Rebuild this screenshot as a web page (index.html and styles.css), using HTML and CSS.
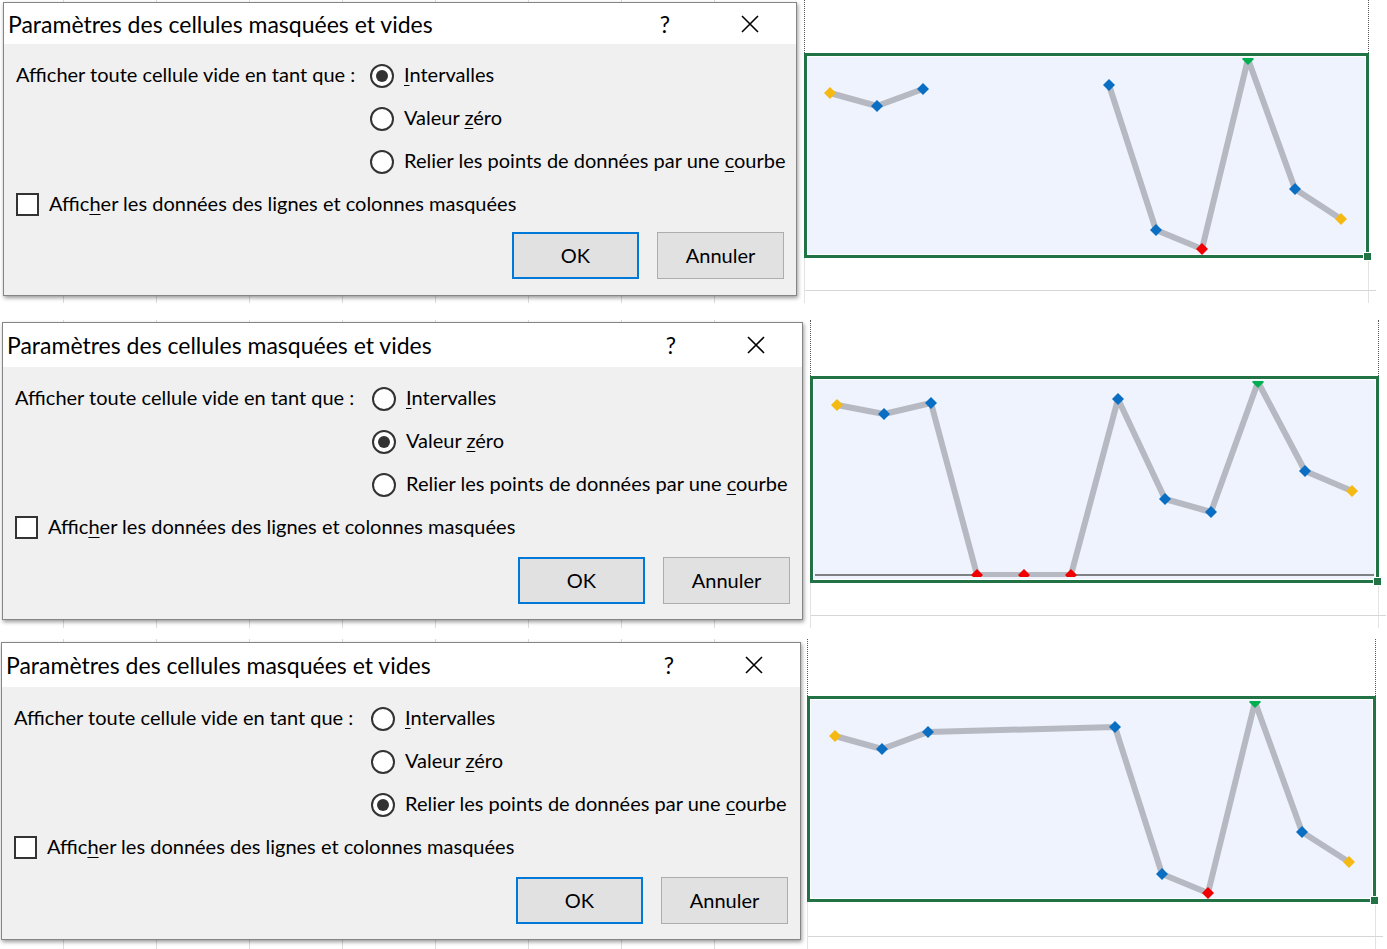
FILE: index.html
```html
<!DOCTYPE html>
<html lang="fr">
<head>
    <meta charset="UTF-8">
    <title>Paramètres des cellules masquées et vides</title>
    <link rel="stylesheet" href="styles.css">
</head>
<body>
<div class="page">

    <!-- 1 : Intervalles -->
    <div class="shot shot-1">
        <div class="dialog">
            <div class="titlebar">
                <div class="title">Paramètres des cellules masquées et vides</div>
                <div class="help">?</div>
                <div class="close"><svg width="18" height="18" viewBox="0 0 18 18"><path d="M1 1L17 17M17 1L1 17"/></svg></div>
            </div>
            <div class="dialog-body">
                <div class="option-grid">
                    <div class="label">Afficher toute cellule vide en tant que :</div>
                    <div class="radio on"><span class="radio-dot"></span><span class="text"><u>I</u>ntervalles</span></div>
                    <div class="radio col-2"><span class="radio-dot"></span><span class="text">Valeur <u>z</u>éro</span></div>
                    <div class="radio col-2"><span class="radio-dot"></span><span class="text">Relier les points de données par une <u>c</u>ourbe</span></div>
                    <div class="check"><span class="check-box"></span><span class="text">Affic<u>h</u>er les données des lignes et colonnes masquées</span></div>
                </div>
                <div class="buttons">
                    <button class="btn btn-default">OK</button>
                    <button class="btn">Annuler</button>
                </div>
            </div>
        </div>
        <div class="sheet">
            <div class="sheet-top"></div>
            <div class="chart">
                <svg viewBox="0 0 559 199">
                    <defs>
                        <path id="dm" d="M0 -6L6 0 0 6 -6 0Z"/>
                        <clipPath id="clip1"><rect x="0" y="2" width="559" height="197"/></clipPath>
                    </defs>
                    <g clip-path="url(#clip1)">
                        <polyline class="spark" points="23,37 70,50 116,33"/>
                        <polyline class="spark" points="302,29 349,174 395,193 441,3 488,133 534,163"/>
                        <use href="#dm" x="23" y="37" class="m-end"/>
                        <use href="#dm" x="70" y="50" class="m-mid"/>
                        <use href="#dm" x="116" y="33" class="m-mid"/>
                        <use href="#dm" x="302" y="29" class="m-mid"/>
                        <use href="#dm" x="349" y="174" class="m-mid"/>
                        <use href="#dm" x="395" y="193" class="m-low"/>
                        <use href="#dm" x="441" y="3" class="m-high"/>
                        <use href="#dm" x="488" y="133" class="m-mid"/>
                        <use href="#dm" x="534" y="163" class="m-end"/>
                    </g>
                </svg>
            </div>
            <div class="sheet-bottom"><div class="grid-row"></div></div>
        </div>
    </div>

    <!-- 2 : Valeur zéro -->
    <div class="shot shot-2">
        <div class="dialog">
            <div class="titlebar">
                <div class="title">Paramètres des cellules masquées et vides</div>
                <div class="help">?</div>
                <div class="close"><svg width="18" height="18" viewBox="0 0 18 18"><path d="M1 1L17 17M17 1L1 17"/></svg></div>
            </div>
            <div class="dialog-body">
                <div class="option-grid">
                    <div class="label">Afficher toute cellule vide en tant que :</div>
                    <div class="radio"><span class="radio-dot"></span><span class="text"><u>I</u>ntervalles</span></div>
                    <div class="radio on col-2"><span class="radio-dot"></span><span class="text">Valeur <u>z</u>éro</span></div>
                    <div class="radio col-2"><span class="radio-dot"></span><span class="text">Relier les points de données par une <u>c</u>ourbe</span></div>
                    <div class="check"><span class="check-box"></span><span class="text">Affic<u>h</u>er les données des lignes et colonnes masquées</span></div>
                </div>
                <div class="buttons">
                    <button class="btn btn-default">OK</button>
                    <button class="btn">Annuler</button>
                </div>
            </div>
        </div>
        <div class="sheet">
            <div class="sheet-top"></div>
            <div class="chart">
                <svg viewBox="0 0 563 201">
                    <defs>
                        <clipPath id="clip2"><rect x="0" y="2" width="563" height="196"/></clipPath>
                    </defs>
                    <line class="axis" x1="2" y1="196" x2="561" y2="196"/>
                    <g clip-path="url(#clip2)">
                        <polyline class="spark" points="24,26 71,35 118,24 164,196 211,196 258,196 305,20 352,120 398,133 445,3 492,92 539,112"/>
                        <use href="#dm" x="24" y="26" class="m-end"/>
                        <use href="#dm" x="71" y="35" class="m-mid"/>
                        <use href="#dm" x="118" y="24" class="m-mid"/>
                        <use href="#dm" x="164" y="196" class="m-low"/>
                        <use href="#dm" x="211" y="196" class="m-low"/>
                        <use href="#dm" x="258" y="196" class="m-low"/>
                        <use href="#dm" x="305" y="20" class="m-mid"/>
                        <use href="#dm" x="352" y="120" class="m-mid"/>
                        <use href="#dm" x="398" y="133" class="m-mid"/>
                        <use href="#dm" x="445" y="3" class="m-high"/>
                        <use href="#dm" x="492" y="92" class="m-mid"/>
                        <use href="#dm" x="539" y="112" class="m-end"/>
                    </g>
                </svg>
            </div>
            <div class="sheet-bottom"><div class="grid-row"></div></div>
        </div>
    </div>

    <!-- 3 : Relier les points -->
    <div class="shot shot-3">
        <div class="dialog">
            <div class="titlebar">
                <div class="title">Paramètres des cellules masquées et vides</div>
                <div class="help">?</div>
                <div class="close"><svg width="18" height="18" viewBox="0 0 18 18"><path d="M1 1L17 17M17 1L1 17"/></svg></div>
            </div>
            <div class="dialog-body">
                <div class="option-grid">
                    <div class="label">Afficher toute cellule vide en tant que :</div>
                    <div class="radio"><span class="radio-dot"></span><span class="text"><u>I</u>ntervalles</span></div>
                    <div class="radio col-2"><span class="radio-dot"></span><span class="text">Valeur <u>z</u>éro</span></div>
                    <div class="radio on col-2"><span class="radio-dot"></span><span class="text">Relier les points de données par une <u>c</u>ourbe</span></div>
                    <div class="check"><span class="check-box"></span><span class="text">Affic<u>h</u>er les données des lignes et colonnes masquées</span></div>
                </div>
                <div class="buttons">
                    <button class="btn btn-default">OK</button>
                    <button class="btn">Annuler</button>
                </div>
            </div>
        </div>
        <div class="sheet">
            <div class="sheet-top"></div>
            <div class="chart">
                <svg viewBox="0 0 563 200">
                    <defs>
                        <clipPath id="clip3"><rect x="0" y="2" width="563" height="198"/></clipPath>
                    </defs>
                    <g clip-path="url(#clip3)">
                        <polyline class="spark" points="25,37 72,50 118,33 305,28 352,175 398,194 445,3 492,133 539,163"/>
                        <use href="#dm" x="25" y="37" class="m-end"/>
                        <use href="#dm" x="72" y="50" class="m-mid"/>
                        <use href="#dm" x="118" y="33" class="m-mid"/>
                        <use href="#dm" x="305" y="28" class="m-mid"/>
                        <use href="#dm" x="352" y="175" class="m-mid"/>
                        <use href="#dm" x="398" y="194" class="m-low"/>
                        <use href="#dm" x="445" y="3" class="m-high"/>
                        <use href="#dm" x="492" y="133" class="m-mid"/>
                        <use href="#dm" x="539" y="163" class="m-end"/>
                    </g>
                </svg>
            </div>
            <div class="sheet-bottom"><div class="grid-row"></div></div>
        </div>
    </div>

</div>
</body>
</html>
```

FILE: styles.css
```css
body {
    margin: 0;
    background: #fff;
    font-family: Lato, "Open Sans", sans-serif;
    color: #000;
}

.page {
    display: flex;
    flex-direction: column;
    width: 1387px;
    height: 949px;
    overflow: hidden;
}

/* one screenshot of the excel window */
.shot {
    display: flex;
    align-items: flex-start;
    background: repeating-linear-gradient(90deg, transparent 0 63px, #dcdcdc 63px 64px, transparent 64px 93px);
}

.shot-1 {
    height: 303px;
}

.shot-2 {
    height: 308px;
    margin-top: 17px;
}

.shot-3 {
    height: 310px;
    margin-top: 11px;
}

/* dialog */
.dialog {
    position: relative;
    z-index: 1;
    flex: none;
    box-sizing: border-box;
    width: 801px;
    height: 298px;
    margin: 2px 0 0 2px;
    border: 1px solid #858585;
    background: #f0f0f0;
    box-shadow: 1px 2px 4px rgba(0,0,0,0.4);
}

.shot-1 .dialog {
    width: 794px;
    height: 294px;
    margin: 2px 0 0 3px;
}

.shot-3 .dialog {
    width: 800px;
    margin: 3px 0 0 1px;
}

.titlebar {
    display: flex;
    align-items: center;
    height: 44px;
    padding: 0 26px 0 4px;
    background: #fff;
}

.shot-1 .titlebar {
    height: 41px;
}

.title {
    flex: 1;
    font-size: 23px;
    white-space: nowrap;
}

.help {
    width: 40px;
    margin-right: 45px;
    text-align: center;
    font-size: 23px;
}

.close {
    display: flex;
    justify-content: center;
    width: 40px;
}

.close path {
    stroke: #000;
    stroke-width: 1.6;
}

.dialog-body {
    padding: 10px 12px 0 12px;
    font-size: 20px;
}

.option-grid {
    display: grid;
    grid-template-columns: 357px 1fr;
    grid-auto-rows: 43px;
    align-items: center;
}

.shot-1 .option-grid {
    grid-template-columns: 354px 1fr;
}

.col-2 {
    grid-column: 2;
}

.label,
.text {
    padding-bottom: 3px;
    white-space: nowrap;
}

.radio,
.check {
    display: flex;
    align-items: center;
    gap: 10px;
}

.check {
    grid-column: 1 / span 2;
}

u {
    text-underline-offset: 3px;
    text-decoration-thickness: 1px;
}

.radio-dot {
    display: grid;
    place-items: center;
    flex: none;
    box-sizing: border-box;
    width: 24px;
    height: 24px;
    border: 2px solid #333;
    border-radius: 50%;
    background: #fff;
}

.radio.on .radio-dot::after {
    content: "";
    width: 12px;
    height: 12px;
    border-radius: 50%;
    background: #333;
}

.check-box {
    flex: none;
    box-sizing: border-box;
    width: 23px;
    height: 23px;
    border: 2px solid #333;
    background: #fff;
}

.buttons {
    display: flex;
    justify-content: flex-end;
    gap: 18px;
    margin-top: 8px;
}

.shot-1 .buttons {
    margin-top: 6px;
}

.btn {
    box-sizing: border-box;
    width: 127px;
    height: 47px;
    padding-bottom: 2px;
    border: 1px solid #adadad;
    background: #e1e1e1;
    font-family: inherit;
    font-size: 20px;
    color: #000;
}

.btn-default {
    border: 2px solid #0078d7;
}

/* excel sheet with the sparkline */
.sheet {
    flex: 1;
    align-self: stretch;
    display: flex;
    flex-direction: column;
    padding-left: 7px;
    background: #fff;
}

.shot-3 .sheet {
    padding-left: 6px;
}

.sheet-top {
    box-sizing: border-box;
    width: 569px;
    height: 56px;
    border-left: 1px dotted #555;
    border-right: 1px dotted #555;
}

.shot-1 .sheet-top {
    width: 565px;
    height: 53px;
}

.shot-3 .sheet-top {
    height: 57px;
}

.chart {
    position: relative;
    box-sizing: border-box;
    width: 569px;
    height: 207px;
    border: 3px solid #217346;
    background: #eef3fd;
    box-shadow: inset 0 0 0 1px #fff;
}

.shot-1 .chart {
    width: 565px;
    height: 205px;
}

.shot-3 .chart {
    height: 206px;
}

.chart::after {
    content: "";
    position: absolute;
    right: -6px;
    bottom: -6px;
    width: 7px;
    height: 7px;
    background: #217346;
    border: 1px solid #fff;
}

.chart svg {
    display: block;
    width: 100%;
    height: 100%;
}

.spark {
    fill: none;
    stroke: #b6b9c1;
    stroke-width: 6;
    stroke-linejoin: round;
}

.axis {
    stroke: #5a5a5a;
    stroke-width: 1.5;
}

.m-end {
    fill: #f5b914;
}

.m-mid {
    fill: #0a6fc2;
}

.m-low {
    fill: #f00000;
}

.m-high {
    fill: #00b050;
}

.sheet-bottom {
    flex: 1;
    box-sizing: border-box;
    width: 569px;
    border-left: 1px solid #e3e3e3;
    border-right: 1px solid #e3e3e3;
}

.shot-1 .sheet-bottom {
    width: 565px;
}

.grid-row {
    height: 32px;
    margin-right: -8px;
    border-bottom: 1px solid #d6d6d6;
}

.shot-3 .grid-row {
    height: 34px;
}
```
